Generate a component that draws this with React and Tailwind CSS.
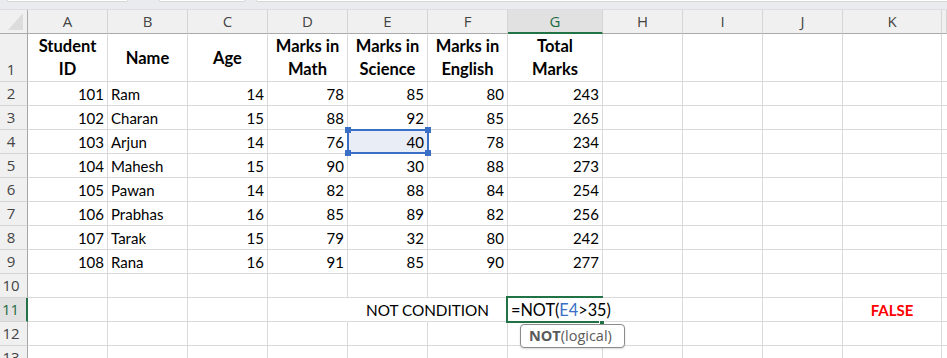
import React from 'react';

const COLS = [
  { l: 'A', w: 'w-[80px]' },
  { l: 'B', w: 'w-[80px]' },
  { l: 'C', w: 'w-[80px]' },
  { l: 'D', w: 'w-[80px]' },
  { l: 'E', w: 'w-[80px]' },
  { l: 'F', w: 'w-[80px]' },
  { l: 'G', w: 'w-[95px]' },
  { l: 'H', w: 'w-[80px]' },
  { l: 'I', w: 'w-[80px]' },
  { l: 'J', w: 'w-[80px]' },
  { l: 'K', w: 'w-[99px]' },
  { l: '', w: 'flex-1' },
];

const DATA = [
  [101, 'Ram', 14, 78, 85, 80, 243],
  [102, 'Charan', 15, 88, 92, 85, 265],
  [103, 'Arjun', 14, 76, 40, 78, 234],
  [104, 'Mahesh', 15, 90, 30, 88, 273],
  [105, 'Pawan', 14, 82, 88, 84, 254],
  [106, 'Prabhas', 16, 85, 89, 82, 256],
  [107, 'Tarak', 15, 79, 32, 80, 242],
  [108, 'Rana', 16, 91, 85, 90, 277],
];

const HEAD = [
  ['Student', 'ID'],
  ['Name'],
  ['Age'],
  ['Marks in', 'Math'],
  ['Marks in', 'Science'],
  ['Marks in', 'English'],
  ['Total', 'Marks'],
];

function RowHead({ n, tall, sel }) {
  return (
    <div
      className={
        'w-[28px] shrink-0 flex justify-center pr-[5px] text-[15px] font-["Open_Sans",sans-serif] border-b border-[#d4d4d4] ' +
        (tall ? 'items-end pb-[1px] ' : 'items-center ') +
        (sel
          ? 'bg-[#e1e1e1] text-[#1e6b41] border-r-2 border-r-[#217346]'
          : 'bg-[#f0f0f0] text-[#444] border-r border-r-[#a6a6a6]')
      }
    >
      {n}
    </div>
  );
}

function Cell({ w, className = '', children }) {
  return (
    <div
      className={
        'shrink-0 flex items-center px-[3px] pt-[1px] whitespace-nowrap overflow-visible border-b border-[#dadada] ' +
        w +
        ' ' +
        className
      }
    >
      {children}
    </div>
  );
}

function EmptyRow({ n, sel }) {
  return (
    <div className="flex h-[24px]">
      <RowHead n={n} sel={sel} />
      {COLS.map((c, i) => (
        <Cell key={i} w={c.w} className="border-r border-r-[#dadada]" />
      ))}
    </div>
  );
}

export default function App() {
  return (
    <div className="relative w-[947px] h-[358px] overflow-hidden bg-white font-['Lato',sans-serif] text-[15px] text-black">
      {/* top toolbar remnant */}
      <div className="flex items-start h-[10px] bg-[#e9ebee] border-b border-[#dcdde0]">
        <div className="ml-[7px] w-[121px] h-[2px] bg-white rounded-b-[3px] border border-t-0 border-[#d6d6d6]" />
        <div className="ml-[31px] w-[86px] h-[2px] bg-white rounded-b-[3px] border border-t-0 border-[#d6d6d6]" />
        <div className="ml-[11px] flex-1 h-[2px] bg-white rounded-bl-[3px] border border-t-0 border-r-0 border-[#d6d6d6]" />
      </div>

      {/* column headers */}
      <div className="flex h-[24px] bg-[#f0f0f0] font-['Open_Sans',sans-serif] text-[15px] text-[#444]">
        <div className="w-[28px] shrink-0 relative border-r border-b border-[#ababab]">
          <svg className="absolute left-[8px] top-[3px]" width="16" height="17" viewBox="0 0 16 17">
            <polygon points="15,0 15,17 0,17" fill="#dcdcdc" />
          </svg>
        </div>
        {COLS.map((c, i) =>
          c.l === 'G' ? (
            <div
              key={i}
              className={'shrink-0 flex items-center justify-center bg-[#e1e1e1] text-[#1e6b41] border-r border-r-[#d5d5d5] border-b-2 border-b-[#217346] ' + c.w}
            >
              {c.l}
            </div>
          ) : (
            <div
              key={i}
              className={'shrink-0 flex items-center justify-center border-r border-r-[#d5d5d5] border-b border-b-[#ababab] ' + c.w}
            >
              {c.l}
            </div>
          )
        )}
      </div>

      {/* row 1 headers */}
      <div className="flex h-[48px]">
        <RowHead n={1} tall />
        {COLS.map((c, i) => (
          <Cell key={i} w={c.w} className="justify-center text-center font-bold text-[16.5px] leading-[23px] border-r border-r-[#dadada]">
            {HEAD[i] ? (
              <div className="flex flex-col items-center">
                {HEAD[i].map((t, j) => (
                  <span key={j}>{t}</span>
                ))}
              </div>
            ) : null}
          </Cell>
        ))}
      </div>

      {/* data rows */}
      {DATA.map((r, ri) => (
        <div key={ri} className="flex h-[24px]">
          <RowHead n={ri + 2} />
          {COLS.map((c, i) => (
            <Cell
              key={i}
              w={c.w}
              className={
                'border-r border-r-[#dadada] ' +
                (i === 1 ? 'justify-start ' : 'justify-end ') +
                (ri === 2 && i === 4 ? 'bg-[#e9edf6]' : '')
              }
            >
              {r[i] !== undefined ? r[i] : null}
            </Cell>
          ))}
        </div>
      ))}

      <EmptyRow n={10} />

      {/* row 11 */}
      <div className="flex h-[24px]">
        <RowHead n={11} sel />
        <Cell w="w-[80px]" className="border-r border-r-[#dadada]" />
        <Cell w="w-[80px]" className="border-r border-r-[#dadada]" />
        <Cell w="w-[80px]" className="border-r border-r-[#dadada]" />
        <Cell w="w-[80px]" className="border-r border-r-transparent" />
        <Cell w="w-[80px]" className="border-r border-r-transparent pl-[18px] text-[15.3px]">
          NOT CONDITION
        </Cell>
        <Cell w="w-[80px]" className="border-r border-r-[#dadada]" />
        <Cell w="w-[95px]" className="border-r border-r-[#dadada]" />
        <Cell w="w-[80px]" className="border-r border-r-[#dadada]" />
        <Cell w="w-[80px]" className="border-r border-r-[#dadada]" />
        <Cell w="w-[80px]" className="border-r border-r-[#dadada]" />
        <Cell w="w-[99px]" className="border-r border-r-[#dadada] justify-center font-bold text-[#ff0000]">
          FALSE
        </Cell>
        <Cell w="flex-1" className="border-r border-r-[#dadada]" />
      </div>

      <EmptyRow n={12} />
      <EmptyRow n={13} />

      {/* E4 selection */}
      <div className="absolute left-[347px] top-[129px] w-[82px] h-[25px] border-2 border-[#3a6fc5]">
        <div className="absolute -left-[4px] -top-[4px] w-[6px] h-[6px] bg-[#3a6fc5]" />
        <div className="absolute -right-[4px] -top-[4px] w-[6px] h-[6px] bg-[#3a6fc5]" />
        <div className="absolute -left-[4px] -bottom-[4px] w-[6px] h-[6px] bg-[#3a6fc5]" />
        <div className="absolute -right-[4px] -bottom-[4px] w-[6px] h-[6px] bg-[#3a6fc5]" />
      </div>

      {/* G11 active edit cell */}
      <div className="absolute left-[506px] top-[296px] w-[97px] h-[27px] border-2 border-[#217346]">
        <div className="absolute -right-[4px] -bottom-[4px] w-[6px] h-[6px] bg-[#217346] border border-white" />
      </div>
      <div className="absolute left-[509px] top-[298px] h-[23px] pl-[2px] pr-[2px] bg-white leading-[23px] text-[16.3px] whitespace-nowrap">
        =NOT(<span className="text-[#3b6fc6]">E4</span>&gt;35)
      </div>

      {/* tooltip */}
      <div className="absolute left-[520px] top-[324px] w-[105px] h-[24px] flex items-center pl-[8px] bg-white border border-[#8c8c8c] rounded-[4px] shadow-[0_1px_2px_rgba(0,0,0,0.15)] font-['Open_Sans',sans-serif] text-[14.5px] text-[#5a5a5a] whitespace-nowrap">
        <span className="font-bold">NOT</span>(logical)
      </div>
    </div>
  );
}
